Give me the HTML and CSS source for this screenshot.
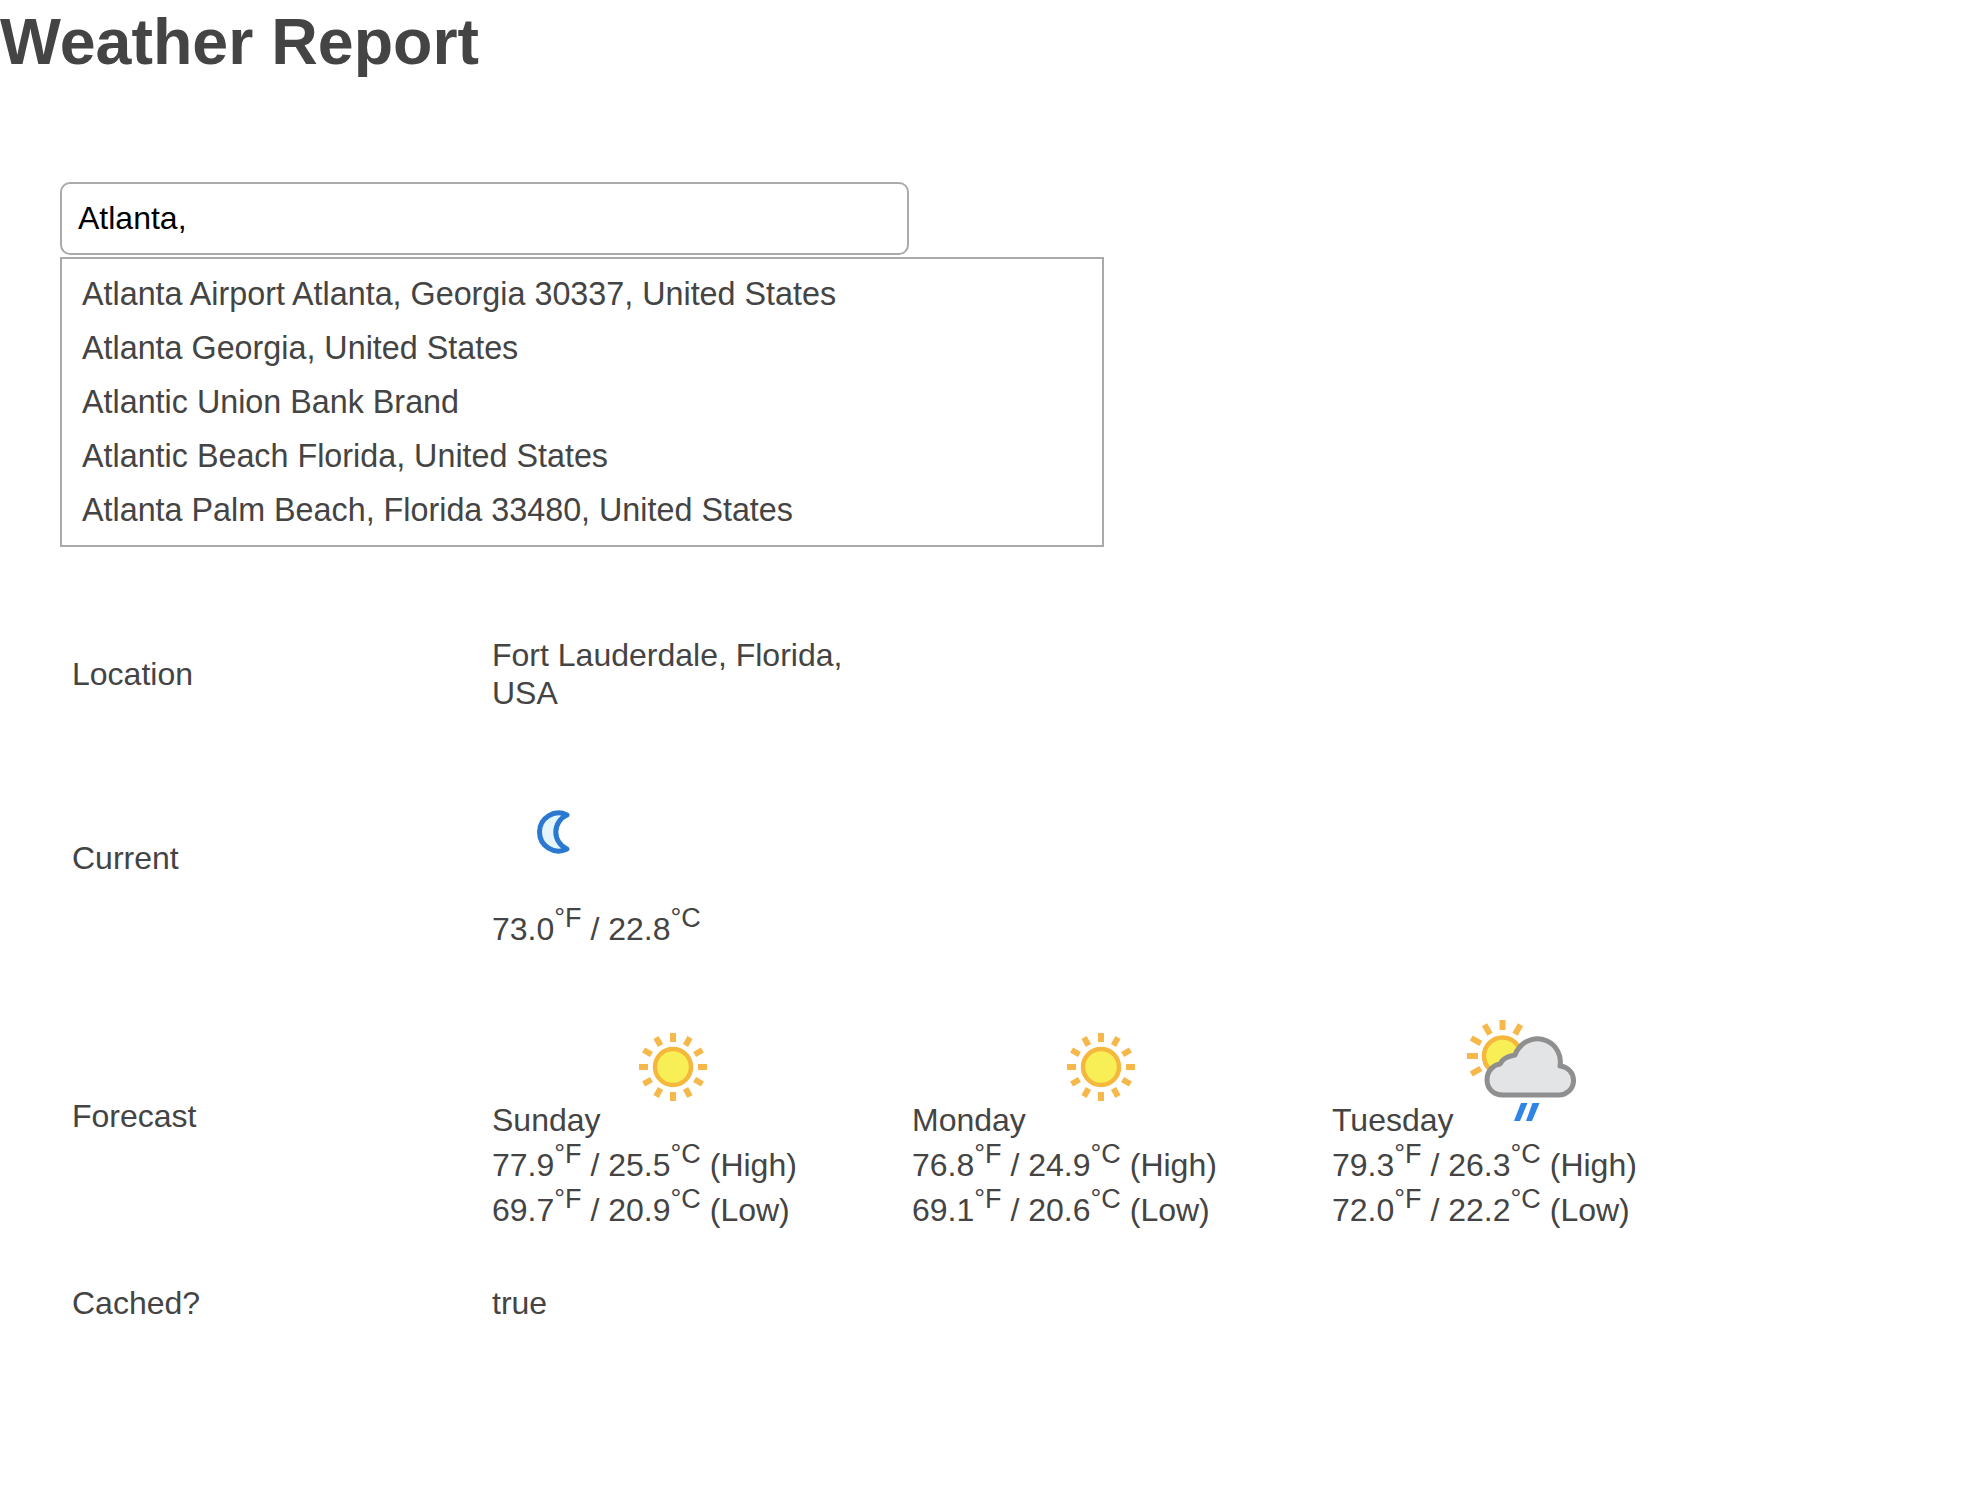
FILE: index.html
```html
<!DOCTYPE html>
<html lang="en">
<head>
<meta charset="utf-8">
<title>Weather Report</title>
<link rel="stylesheet" href="styles.css">
</head>
<body>
<h1 class="title">Weather Report</h1>
<div class="search">
  <div class="search-input">Atlanta,</div>
  <ul class="suggestions">
    <li>Atlanta Airport Atlanta, Georgia 30337, United States</li>
    <li>Atlanta Georgia, United States</li>
    <li>Atlantic Union Bank Brand</li>
    <li>Atlantic Beach Florida, United States</li>
    <li>Atlanta Palm Beach, Florida 33480, United States</li>
  </ul>
</div>
<div class="report">
  <div class="row row-location">
    <div class="label">Location</div>
    <div class="value location">Fort Lauderdale, Florida, USA</div>
  </div>
  <div class="row row-current">
    <div class="label">Current</div>
    <div class="value">
      <div class="moon-box">
        <svg class="moon" viewBox="0 0 36 44" width="36" height="44"><path d="M32 5 A19 19 0 1 0 32 39 A18.500 18.500 0 0 1 32 5 Z" fill="#e4f5fb" stroke="#2b78d0" stroke-width="5" stroke-linejoin="round"/></svg>
      </div>
      <div class="temp">73.0<sup>°F</sup> / 22.8<sup>°C</sup></div>
    </div>
  </div>
  <div class="row row-forecast">
    <div class="label">Forecast</div>
    <div class="days">
      <div class="day">
        <div class="icon-box">
          <svg viewBox="0 0 72 72" width="72" height="72"><g stroke="#f6b84a" stroke-width="6"><path d="M36 2V11M36 61V70M2 36H11M61 36H70M19 6.600L23.500 14.400M48.500 57.600L53 65.400M6.600 19L14.400 23.500M57.600 48.500L65.400 53M6.600 53L14.400 48.500M57.600 23.500L65.400 19M19 65.400L23.500 57.600M48.500 14.400L53 6.600"/></g><circle cx="36" cy="36" r="18" fill="#f8ee55" stroke="#f5b83c" stroke-width="4.500"/></svg>
        </div>
        <div class="day-name">Sunday</div>
        <div class="temp">77.9<sup>°F</sup> / 25.5<sup>°C</sup> (High)</div>
        <div class="temp">69.7<sup>°F</sup> / 20.9<sup>°C</sup> (Low)</div>
      </div>
      <div class="day">
        <div class="icon-box icon-box-wide">
          <svg viewBox="0 0 72 72" width="72" height="72"><g stroke="#f6b84a" stroke-width="6"><path d="M36 2V11M36 61V70M2 36H11M61 36H70M19 6.600L23.500 14.400M48.500 57.600L53 65.400M6.600 19L14.400 23.500M57.600 48.500L65.400 53M6.600 53L14.400 48.500M57.600 23.500L65.400 19M19 65.400L23.500 57.600M48.500 14.400L53 6.600"/></g><circle cx="36" cy="36" r="18" fill="#f8ee55" stroke="#f5b83c" stroke-width="4.500"/></svg>
        </div>
        <div class="day-name">Monday</div>
        <div class="temp">76.8<sup>°F</sup> / 24.9<sup>°C</sup> (High)</div>
        <div class="temp">69.1<sup>°F</sup> / 20.6<sup>°C</sup> (Low)</div>
      </div>
      <div class="day">
        <div class="icon-box">
          <svg class="cloud-icon" viewBox="0 0 110 104" width="110" height="104"><g stroke="#f6b84a" stroke-width="6"><path d="M35.500 1V11M0 37H11M17.500 5.800L23 15.300M4.300 19L13.800 24.500M4.300 55L13.800 49.500M53.500 5.800L48 15.300"/></g><circle cx="35.500" cy="37" r="18.500" fill="#f8ee55" stroke="#f5b83c" stroke-width="4.500"/><path d="M36 76 C26 76 20 69 20 61 C20 52 26 46 33 45 C35 40 42 37 48 36 C49 33 50 31 52 29 A23 23 0 0 1 93 47 A14.500 14.500 0 0 1 91 76 Z" fill="#e3e4e6" stroke="#8f8f8f" stroke-width="5" stroke-linejoin="round"/><path d="M54 84H60.500L53 102H47ZM65.500 84H72.500L65 102H59Z" fill="#2f85e6"/></svg>
        </div>
        <div class="day-name">Tuesday</div>
        <div class="temp">79.3<sup>°F</sup> / 26.3<sup>°C</sup> (High)</div>
        <div class="temp">72.0<sup>°F</sup> / 22.2<sup>°C</sup> (Low)</div>
      </div>
    </div>
  </div>
  <div class="row row-cached">
    <div class="label">Cached?</div>
    <div class="value">true</div>
  </div>
</div>
</body>
</html>
```
FILE: styles.css
```css
html, body {
  margin: 0;
  padding: 0;
  background: #fff;
}
body {
  font-family: "Liberation Sans", Arial, sans-serif;
  font-size: 32px;
  line-height: 38px;
  color: #444;
  min-height: 1488px;
}
.title {
  margin: 0;
  font-size: 64.500px;
  line-height: 84px;
  font-weight: 700;
  color: #444;
}
.search {
  margin: 98px 0 0 60px;
}
.search-input {
  box-sizing: border-box;
  width: 849px;
  height: 73px;
  padding: 0 16px;
  line-height: 69px;
  font-size: 32px;
  color: #000;
  border: 2px solid #aaa;
  border-radius: 10px;
}
.suggestions {
  box-sizing: border-box;
  list-style: none;
  width: 1044px;
  height: 290px;
  margin: 2px 0 0;
  padding: 8px 20px;
  border: 2px solid #aaa;
  font-size: 32.300px;
}
.suggestions li {
  height: 54px;
  line-height: 54px;
}
.report {
  margin: 89px 0 0 72px;
}
.row {
  display: flex;
  align-items: center;
}
.label {
  width: 420px;
  flex: none;
}
.value {
  flex: none;
}
.location {
  width: 372px;
}
.row-current {
  margin-top: 56px;
}
.moon-box {
  display: flex;
  height: 128px;
  padding-left: 43px;
  align-items: center;
}
.moon {
  filter: blur(0.5px);
}
.moon-box + .temp {
  margin-top: 14px;
}
.row-forecast {
  margin-top: 55px;
}
.days {
  display: flex;
}
.day {
  width: 420px;
  flex: none;
}
.icon-box {
  display: flex;
  justify-content: center;
  width: 362px;
  height: 72px;
  padding-top: 28px;
}
.icon-box svg {
  filter: blur(0.5px);
}
.icon-box-wide {
  width: 378px;
}
.cloud-icon {
  flex: none;
  margin: -12px 0 0 18px;
}
.day-name {
  margin-top: -2px;
}
sup {
  font-size: 27px;
  line-height: 0;
  vertical-align: 13px;
}
.day .temp {
  margin-top: 7px;
}
.row-cached {
  margin-top: 55px;
}
```
